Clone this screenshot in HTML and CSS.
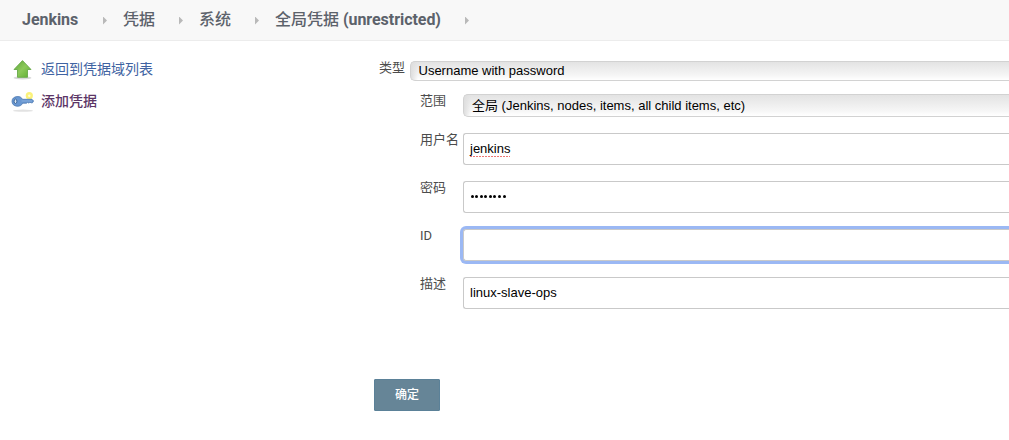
FILE: index.html
```html
<!DOCTYPE html>
<html lang="zh-CN">
<head>
<meta charset="utf-8">
<title>Jenkins</title>
<link rel="stylesheet" href="styles.css">
</head>
<body>
<nav class="breadcrumbs">
  <span class="crumb crumb-home"><b>Jenkins</b></span><i class="sep"></i>
  <span class="crumb crumb-cred">凭据</span><i class="sep"></i>
  <span class="crumb crumb-system">系统</span><i class="sep"></i>
  <span class="crumb crumb-domain">全局凭据 <b>(unrestricted)</b></span><i class="sep"></i>
</nav>
<div class="page">
  <aside class="tasks">
    <a class="task">
      <svg class="icon" width="24" height="24" viewBox="0 0 24 24">
        <defs><linearGradient id="green" x1="0" y1="0" x2="1" y2="1"><stop offset="0" stop-color="#5da338"/><stop offset=".5" stop-color="#8cc95a"/><stop offset="1" stop-color="#5cac2e"/></linearGradient></defs>
        <ellipse cx="11.5" cy="20.9" rx="9" ry="1.5" fill="#d8d8d8"/>
        <path d="M11.5 3.6 20 12.5H16.5V20.3H6.5V12.5H3Z" fill="url(#green)" stroke="#68a94a" stroke-width=".9" stroke-linejoin="round"/>
      </svg>
      <span>返回到凭据域列表</span>
    </a>
    <a class="task task-current">
      <svg class="icon" width="24" height="24" viewBox="0 0 24 24">
        <ellipse cx="12" cy="21.7" rx="10" ry="1.1" fill="#e2e2e2"/>
        <circle cx="18.3" cy="6.7" r="3.6" fill="#fbf27a"/>
        <circle cx="18.3" cy="6.7" r="1.2" fill="#fffdd8"/>
        <path d="M6 7.6C9 7.2 10.5 8.6 11.5 10.3H21L22.6 12 21.4 13.8H20L19 13.1 18 14.2 16.8 13.2 15.5 14.2H11.7C10.6 16.4 8.8 17.4 6 17.2 2.8 17 1 15 1 12.3S3 7.8 6 7.6Z" fill="#6897d2" stroke="#4c79b0" stroke-width=".8"/>
        <path d="M10.5 12H21" stroke="#8fb2dd" stroke-width=".8"/>
        <ellipse cx="4.5" cy="12.3" rx="1.4" ry="2.2" fill="#d8e5f2" stroke="#355f91" stroke-width=".9"/>
      </svg>
      <span>添加凭据</span>
    </a>
  </aside>
  <main class="form">
    <div class="row kind-row"><label class="label">类型</label><div class="select kind">Username with password</div></div>
    <div class="fields">
      <div class="row"><label class="label">范围</label><div class="select scope">全局 (Jenkins, nodes, items, all child items, etc)</div></div>
      <div class="row"><label class="label">用户名</label><div class="input"><span class="misspelled">jenkins</span></div></div>
      <div class="row"><label class="label">密码</label><div class="input"><span class="password"><i></i><i></i><i></i><i></i><i></i><i></i><i></i><i></i></span></div></div>
      <div class="row"><label class="label">ID</label><div class="input focused"></div></div>
      <div class="row"><label class="label">描述</label><div class="input">linux-slave-ops</div></div>
    </div>
    <button class="submit">确定</button>
  </main>
</div>
</body>
</html>
```
FILE: styles.css
```css
* { box-sizing: border-box; }
body {
  margin: 0;
  height: 440px;
  overflow: hidden;
  background: #fff;
  color: #4c4c4c;
  font-family: Roboto, "Noto Sans CJK SC", sans-serif;
  font-size: 13px;
}
.breadcrumbs {
  display: flex;
  align-items: center;
  height: 41px;
  padding-left: 22px;
  background: #f8f8f8;
  border-bottom: 1px solid #ececec;
  color: #5c626b;
  font-size: 16px;
  font-weight: 500;
  line-height: 40px;
  white-space: nowrap;
}
.crumb { flex: none; height: 40px; }
.crumb b { font-weight: 700; letter-spacing: -.05px; }
.crumb-home { width: 81px; }
.crumb-cred, .crumb-system { width: 56px; }
.crumb-domain { width: 190px; }
.sep {
  flex: none;
  width: 4px;
  height: 8px;
  margin: 1px 16px 0 0;
  background: #b9b9b9;
  clip-path: polygon(0 0, 100% 50%, 0 100%);
}
.page { display: flex; }
.tasks { flex: none; width: 374px; padding: 16px 0 0 11px; }
.task {
  display: flex;
  align-items: center;
  gap: 6px;
  height: 24px;
  margin-bottom: 8px;
  color: #4063a2;
  font-size: 14px;
}
.task span { padding-bottom: 2px; }
.task-current { color: #5c3566; font-weight: 500; }
.icon { flex: none; }
.form { flex: none; width: 635px; padding: 20px 0 0 6px; }
.row { display: flex; align-items: flex-start; }
.label { flex: none; width: 43px; line-height: 18px; margin-top: -2px; }
.kind-row .label { width: 31px; margin-left: -1px; }
.select, .input {
  flex: 1;
  border: 1px solid #c9c9c9;
  border-right: 0;
  border-radius: 3px 0 0 3px;
  color: #000;
  font-family: "Liberation Sans", "Noto Sans CJK SC", sans-serif;
  white-space: nowrap;
}
.select {
  border-color: #d2d2d2;
  border-radius: 5px 0 0 5px;
  background: linear-gradient(90deg, #dedede, transparent 7px), linear-gradient(#e3e3e3, #f6f6f6 75%, #fff);
  padding-left: 8px;
}
.kind { height: 20px; padding-left: 7.5px; line-height: 18px; }
.scope { height: 23px; line-height: 21px; }
.fields { display: grid; row-gap: 16px; padding: 13px 0 0 40px; }
.input {
  display: flex;
  align-items: center;
  height: 32px;
  padding: 0 0 2px 6px;
  background: #fff;
}
.misspelled {
  line-height: 15px;
  padding-bottom: 1px;
  margin-bottom: -1px;
  background: repeating-linear-gradient(90deg, #ed7774 0 2px, transparent 2px 3px) 0 100% / 100% 1px no-repeat;
}
.password { display: flex; gap: 1.6px; padding-left: .5px; }
.password i { width: 3px; height: 3px; border-radius: 50%; background: #000; }
.focused { box-shadow: 0 0 0 3px #9bb8f4; }
.submit {
  display: block;
  width: 66px;
  height: 32px;
  margin: 70px 0 0 -6px;
  padding: 0;
  border: 1px solid #5b8198;
  border-radius: 1px;
  background: #668597;
  color: #fff;
  font: 500 12px/30px Roboto, "Noto Sans CJK SC", sans-serif;
}
```
